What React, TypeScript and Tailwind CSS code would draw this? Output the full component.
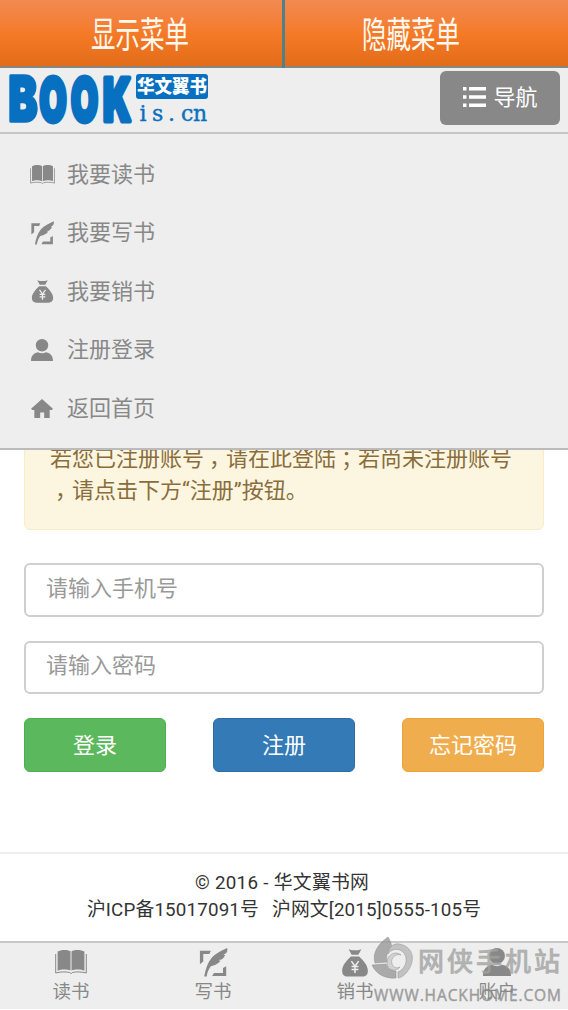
import React, { useState } from "react";

type IconProps = { className?: string };

const BookIcon: React.FC<IconProps> = ({ className }) => (
  <svg viewBox="0 0 32 26" fill="currentColor" className={className}>
    <path d="M2.600 2.500C6 .5 12 .3 15.500 2.300V21.500C12 20 6 20 2.600 21.700z" />
    <path d="M29.400 2.500C26 .5 20 .3 16.500 2.300V21.500C20 20 26 20 29.400 21.700z" />
    <path
      d="M.7 5v19c4-1.200 10.300-1.500 13.900-.5.6 1.200 2.200 1.200 2.800 0 3.600-1 9.900-.7 13.900.5V5"
      fill="none"
      stroke="currentColor"
      strokeWidth="1"
    />
  </svg>
);

const QuillIcon: React.FC<IconProps> = ({ className }) => (
  <svg viewBox="1 0 31 32" fill="currentColor" className={className}>
    <path d="M1.500 3h12L12 6.500H5.200V15L1.500 18z" />
    <path d="M30.500 20v11H15l2-3.500h10V22z" />
    <path d="M31.500 0c.8 2.600.2 4.400-1.500 6.200l-2.600.9 1.900.6c-.9 2.400-2.300 3.800-4 5.100l-3.200.5 2.100 1c-3 3.500-6.700 4.800-10.700 5.800C11.300 23 9.600 27 8.900 31.500H6.300C7.800 24 9.400 17 14.400 11 18.900 5.700 25.500 3 31.500 0z" />
  </svg>
);

const MoneyBagIcon: React.FC<IconProps> = ({ className }) => (
  <svg viewBox="0 0 30 32" fill="currentColor" className={className}>
    <path d="M8 1.500l3.500 1h7l3.500-1L18.700 7.500h-7.400z" />
    <path d="M10.500 9.500h9c4.500 4 9.700 10 9.700 15.500 0 4.500-2.500 6.500-6 6.500H6.800c-3.500 0-6-2-6-6.500C.8 19.500 6 13.500 10.500 9.500z" />
    <path
      d="M11 14.500l4 5.500 4-5.500M15 20v7.500M11.200 20.500h7.600M11.200 23.800h7.600"
      fill="none"
      stroke="#eee"
      strokeWidth="1.700"
    />
  </svg>
);

const UserIcon: React.FC<IconProps> = ({ className }) => (
  <svg viewBox="0 0 30 30" fill="currentColor" className={className}>
    <ellipse cx="15" cy="8.500" rx="8.500" ry="8.500" />
    <path d="M0 30c0-7 3-10.500 9.500-12 3.500 2 7.500 2 11 0C27 19.500 30 23 30 30z" />
  </svg>
);

const HomeIcon: React.FC<IconProps> = ({ className }) => (
  <svg viewBox="0 0 30 26" fill="currentColor" className={className}>
    <path d="M15 0l15 13.500-1.500 1.500H25.500v11H18v-7.500h-5.500V26H4.500V15h-3L0 13.500z" />
  </svg>
);

const menuItems = [
  { label: "我要读书", Icon: BookIcon, size: "w-[25px] h-[21px]" },
  { label: "我要写书", Icon: QuillIcon, size: "w-[23px] h-6" },
  { label: "我要销书", Icon: MoneyBagIcon, size: "w-[23px] h-6" },
  { label: "注册登录", Icon: UserIcon, size: "w-[22px] h-[22px]" },
  { label: "返回首页", Icon: HomeIcon, size: "w-[22px] h-[19px]" },
];

const tabs = [
  { label: "读书", Icon: BookIcon, size: "w-8 h-[26px]" },
  { label: "写书", Icon: QuillIcon, size: "w-[29px] h-[29px]" },
  { label: "销书", Icon: MoneyBagIcon, size: "w-[28px] h-[29px]" },
  { label: "账户", Icon: UserIcon, size: "w-[28px] h-[28px]" },
];

const Logo = () => (
  <svg width="204" height="56" viewBox="0 0 204 56" fill="#0870c0" className="overflow-visible">
    <g
      fontFamily="Inter, sans-serif"
      fontWeight="900"
      fontSize="59"
      stroke="#0870c0"
      strokeWidth="5"
      strokeLinejoin="round"
    >
      <text x="3.500" y="50" strokeWidth="3.500" fontSize="62" textLength="29" lengthAdjust="spacingAndGlyphs">B</text>
      <text x="34.500" y="50" textLength="27" lengthAdjust="spacingAndGlyphs">O</text>
      <text x="66" y="50" textLength="27" lengthAdjust="spacingAndGlyphs">O</text>
      <text x="98" y="50" textLength="28" lengthAdjust="spacingAndGlyphs">K</text>
    </g>
    <rect x="131" y="3" width="72" height="25" rx="3" />
    <text
      x="132"
      y="22"
      fill="#fff"
      fontFamily="Noto Sans CJK SC, sans-serif"
      fontWeight="900"
      fontSize="18"
      textLength="70"
      lengthAdjust="spacingAndGlyphs"
    >
      华文翼书
    </text>
    <text
      x="134.500 147 163 176 188"
      y="50"
      stroke="#0870c0"
      strokeWidth=".4"
      fontFamily="DejaVu Serif, serif"
      fontSize="22"
    >
      is.cn
    </text>
  </svg>
);

const Watermark = () => (
  <svg width="200" height="76" viewBox="0 0 200 76" className="absolute right-0 bottom-0 opacity-80">
    <g fill="#9a9a9a" stroke="#777" strokeWidth=".5">
      <path d="M20 3c-10 7-16 16-13 26l12-1c-1-6 0-11 5-15-1-4-2-7-4-10z" />
      <path d="M4 31l14-1c2 5 6 7 10 7v7C17 45 8 40 4 31z" />
      <path d="M31 10c13 2 17 14 10 25-3 5-6 8-11 9v-6c8-3 11-14 5-20-5-5-13-2-15 2 0-6 5-11 11-10z" fill="#b8b8b8" />
      <path d="M33 21c-5-2-11 3-9 9 1 3 4 5 8 3-5 6-13 3-13-4 0-8 8-13 14-8z" fill="#ccc" />
    </g>
    <text
      x="50"
      y="37"
      fill="#a4a4a4"
      stroke="#999"
      strokeWidth=".5"
      fontFamily="Noto Sans CJK SC, sans-serif"
      fontWeight="500"
      fontSize="26"
      textLength="142"
      lengthAdjust="spacing"
    >
      网侠手机站
    </text>
    <text
      x="6"
      y="67"
      fill="#888"
      stroke="#888"
      strokeWidth=".4"
      fontFamily="Open Sans, sans-serif"
      fontSize="15.500"
      textLength="187"
      lengthAdjust="spacing"
    >
      WWW.HACKHOME.COM
    </text>
  </svg>
);

// Full-width punctuation centred in its cell
const Mark: React.FC<{ children: string }> = ({ children }) => (
  <span className="inline-block w-[22px] pl-[5px]">{children}</span>
);

const App: React.FC = () => {
  const [menuOpen, setMenuOpen] = useState(true);

  return (
    <div className="relative flex h-[1010px] w-[568px] flex-col overflow-hidden bg-white font-[Roboto,'Noto_Sans_CJK_SC',sans-serif] text-[22px]">
      {/* Show / hide switches */}
      <div className="grid h-[68px] shrink-0 grid-cols-[282px_3px_1fr] border-b-2 border-[#898783] bg-linear-to-b from-[#f28a50] via-[#f57a28] to-[#e36c18] text-[24.500px] leading-none text-[#fff8ee]">
        <button onClick={() => setMenuOpen(true)} className="pt-[7px] pr-0.5">
          <span className="inline-block scale-y-[1.500]">显示菜单</span>
        </button>
        <div className="-mb-0.5 bg-[#50808a]" />
        <button onClick={() => setMenuOpen(false)} className="pr-[31px] pt-[7px]">
          <span className="inline-block scale-y-[1.500]">隐藏菜单</span>
        </button>
      </div>

      {/* Header */}
      <header className="relative z-10 flex h-[66px] shrink-0 items-start justify-between border-b-2 border-[#c5c5c5] bg-[#eee] pl-[5px] pr-2 pt-[3px]">
        <Logo />
        <button
          onClick={() => setMenuOpen(!menuOpen)}
          className="flex h-[54px] w-[120px] items-center justify-center gap-[7px] rounded-md bg-[#888] pb-0.5 pl-px text-white"
        >
          <svg width="23" height="20" viewBox="0 0 23 20" fill="currentColor">
            <path d="M0 0h3.500v3.500H0zM6 0h17v3.500H6zM0 8.250h3.500v3.500H0zM6 8.250h17v3.500H6zM0 16.500h3.500V20H0zM6 16.500h17V20H6z" />
          </svg>
          导航
        </button>
        {menuOpen && (
          <nav className="absolute left-0 right-0 top-full mt-0.5 h-[316px] border-b-2 border-[#bbb] bg-[#eee] pt-[11px] text-[#888]">
            {menuItems.map(({ label, Icon, size }) => (
              <a key={label} href="#" className="flex h-[58.500px] items-center pl-[29px]">
                <span className="mr-3 flex w-[26px] justify-center">
                  <Icon className={size} />
                </span>
                {label}
              </a>
            ))}
          </nav>
        )}
      </header>

      <main className="px-6 pt-[240px]">
        <div className="flex h-[156px] flex-col justify-end rounded-md border border-[#f7ebca] bg-[#fcf6e1] pb-[22px] pl-[25px] text-[#8a6d3b]">
          <p className="h-8 whitespace-nowrap leading-8">
            若您已注册账号<Mark>，</Mark>请在此登陆<Mark>；</Mark>若尚未注册账号
          </p>
          <p className="h-8 whitespace-nowrap leading-8">
            <Mark>，</Mark>请点击下方“注册”按钮。
          </p>
        </div>

        <form className="flex flex-col">
          <input
            type="text"
            placeholder="请输入手机号"
            className="mt-[33px] h-[54px] rounded-md border-2 border-[#cfcfcf] px-5 pb-1 placeholder:text-[#999]"
          />
          <input
            type="password"
            placeholder="请输入密码"
            className="mt-6 h-[53px] rounded-md border-2 border-[#cfcfcf] px-5 pb-1 placeholder:text-[#999]"
          />
          <div className="mt-6 flex justify-between text-white">
            <button type="button" className="h-[54px] w-[142px] rounded-md border border-[#4cae4c] bg-[#5cb85c]">
              登录
            </button>
            <button type="button" className="h-[54px] w-[142px] rounded-md border border-[#2e6da4] bg-[#337ab7]">
              注册
            </button>
            <button type="button" className="h-[54px] w-[142px] rounded-md border border-[#eea236] bg-[#f0ad4e]">
              忘记密码
            </button>
          </div>
        </form>
      </main>

      <footer className="mt-20 border-t-2 border-[#eee] pt-4 text-center text-[18.800px] leading-[27px] text-[#333]">
        <p className="pr-1 tracking-[0.3px]">© 2016 - 华文翼书网</p>
        <p className="tracking-[0.150px]">
          沪ICP备15017091号<span className="ml-[13px]">沪网文[2015]0555-105号</span>
        </p>
      </footer>

      {/* Bottom tabs */}
      <div className="mb-px mt-auto grid h-[68px] shrink-0 grid-cols-4 border-t-2 border-[#c8c8c8] bg-[#eee] text-[18.500px] leading-none text-[#888]">
        {tabs.map(({ label, Icon, size }) => (
          <a key={label} href="#" className="flex flex-col items-center">
            <span className="mb-0.5 flex h-[38px] items-center">
              <Icon className={size} />
            </span>
            {label}
          </a>
        ))}
      </div>

      <Watermark />
    </div>
  );
};

export default App;
